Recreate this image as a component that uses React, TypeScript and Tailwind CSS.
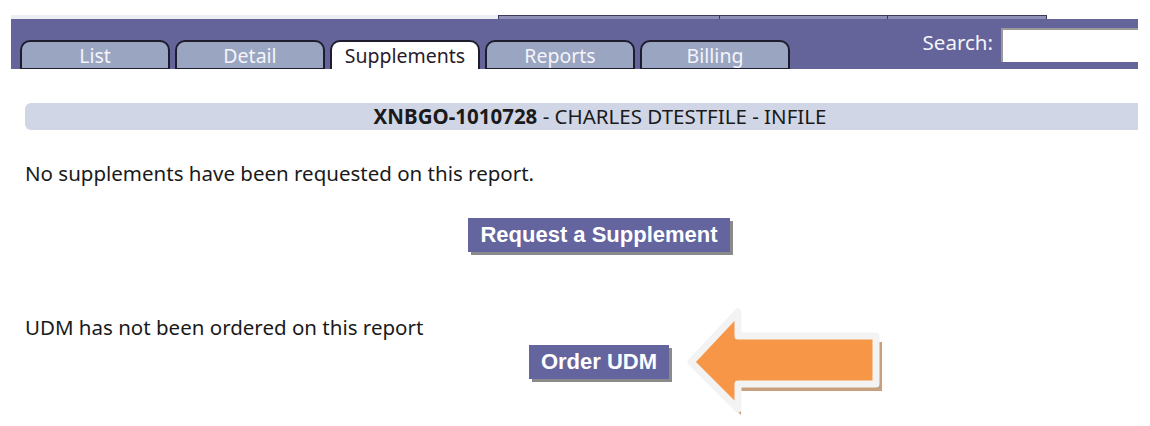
import React from 'react'

const tabs = ['List', 'Detail', 'Supplements', 'Reports', 'Billing']

const Tab = ({ label, active }: { label: string; active?: boolean }) => (
  <div
    className={
      'flex h-[29px] w-[150px] items-center justify-center rounded-t-[10px] border-2 border-[#1d1d2e] text-[19.5px] leading-none ' +
      (active ? 'border-b-0 bg-white text-[#2a1a2a]' : 'border-b bg-[#9aa5c1] text-[#f4f4fa]')
    }
  >
    <span className="pt-[1px]">{label}</span>
  </div>
)

const ArrowPointer = () => (
  <svg width="200" height="115" viewBox="0 0 200 115" className="absolute left-[683px] top-[303px]">
    <polygon points="9,64 58,15 58,39 199,39 199,88 58,88 58,112" fill="#c9a07e" />
    <polygon
      points="8,59 55,9 55,33 193,33 193,81 55,81 55,106"
      fill="#f79646"
      stroke="#f3f3f3"
      strokeWidth="7"
      strokeLinejoin="round"
    />
  </svg>
)

const Button = ({ children }: { children: React.ReactNode }) => (
  <button className="h-[34px] bg-[#64649f] px-[12px] text-[22px] font-bold leading-none text-white shadow-[3px_3px_0_#8a8a8a] [font-family:'Liberation_Sans',Arial,sans-serif]">
    {children}
  </button>
)

export default function App() {
  return (
    <div className="relative h-[426px] w-[1150px] overflow-hidden bg-white text-[#1a1a1a] [font-family:'Noto_Sans','Open_Sans',sans-serif]">
      <div className="flex h-[15px]" />
      <div className="ml-[11px] flex h-[4px] w-[1127px]">
        <div className="w-[487px] bg-[#eceef4]" />
        <div className="w-[222px] border-x border-t border-[#3a3a5a] bg-[#8f8fb8]" />
        <div className="w-[168px] border-r border-t border-[#3a3a5a] bg-[#8f8fb8]" />
        <div className="w-[159px] border-r border-t border-[#3a3a5a] bg-[#8f8fb8]" />
      </div>
      <div className="ml-[11px] flex h-[50px] w-[1127px] justify-between bg-[#64649a]">
        <div className="flex items-end gap-[5px] pl-[9px]">
          {tabs.map((t) => (
            <Tab key={t} label={t} active={t === 'Supplements'} />
          ))}
        </div>
        <div className="flex items-start gap-[8px] pt-[9px]">
          <span className="pt-[4px] text-[20.5px] leading-none text-[#f4f4fa]">Search:</span>
          <input className="h-[34px] w-[137px] border-l-2 border-t-2 border-[#9a9a9a] bg-white" />
        </div>
      </div>

      <div className="ml-[25px] mt-[34px] flex h-[27px] w-[1113px] items-center justify-center rounded-l-[6px] bg-[#d0d6e6] pl-[37px] text-[20.5px] leading-none">
        <span className="font-bold">XNBGO-1010728</span>
        <span>&nbsp;- CHARLES DTESTFILE - INFILE</span>
      </div>

      <p className="ml-[25px] mt-[31px] text-[20.5px] leading-[24px]">No supplements have been requested on this report.</p>

      <div className="mt-[33px] flex justify-center pl-[48px]">
        <Button>Request a Supplement</Button>
      </div>

      <p className="ml-[25px] mt-[63px] text-[20.5px] leading-[24px]">UDM has not been ordered on this report</p>

      <div className="mt-[6px] flex justify-center pl-[48px]">
        <Button>Order UDM</Button>
      </div>

      <ArrowPointer />
    </div>
  )
}
